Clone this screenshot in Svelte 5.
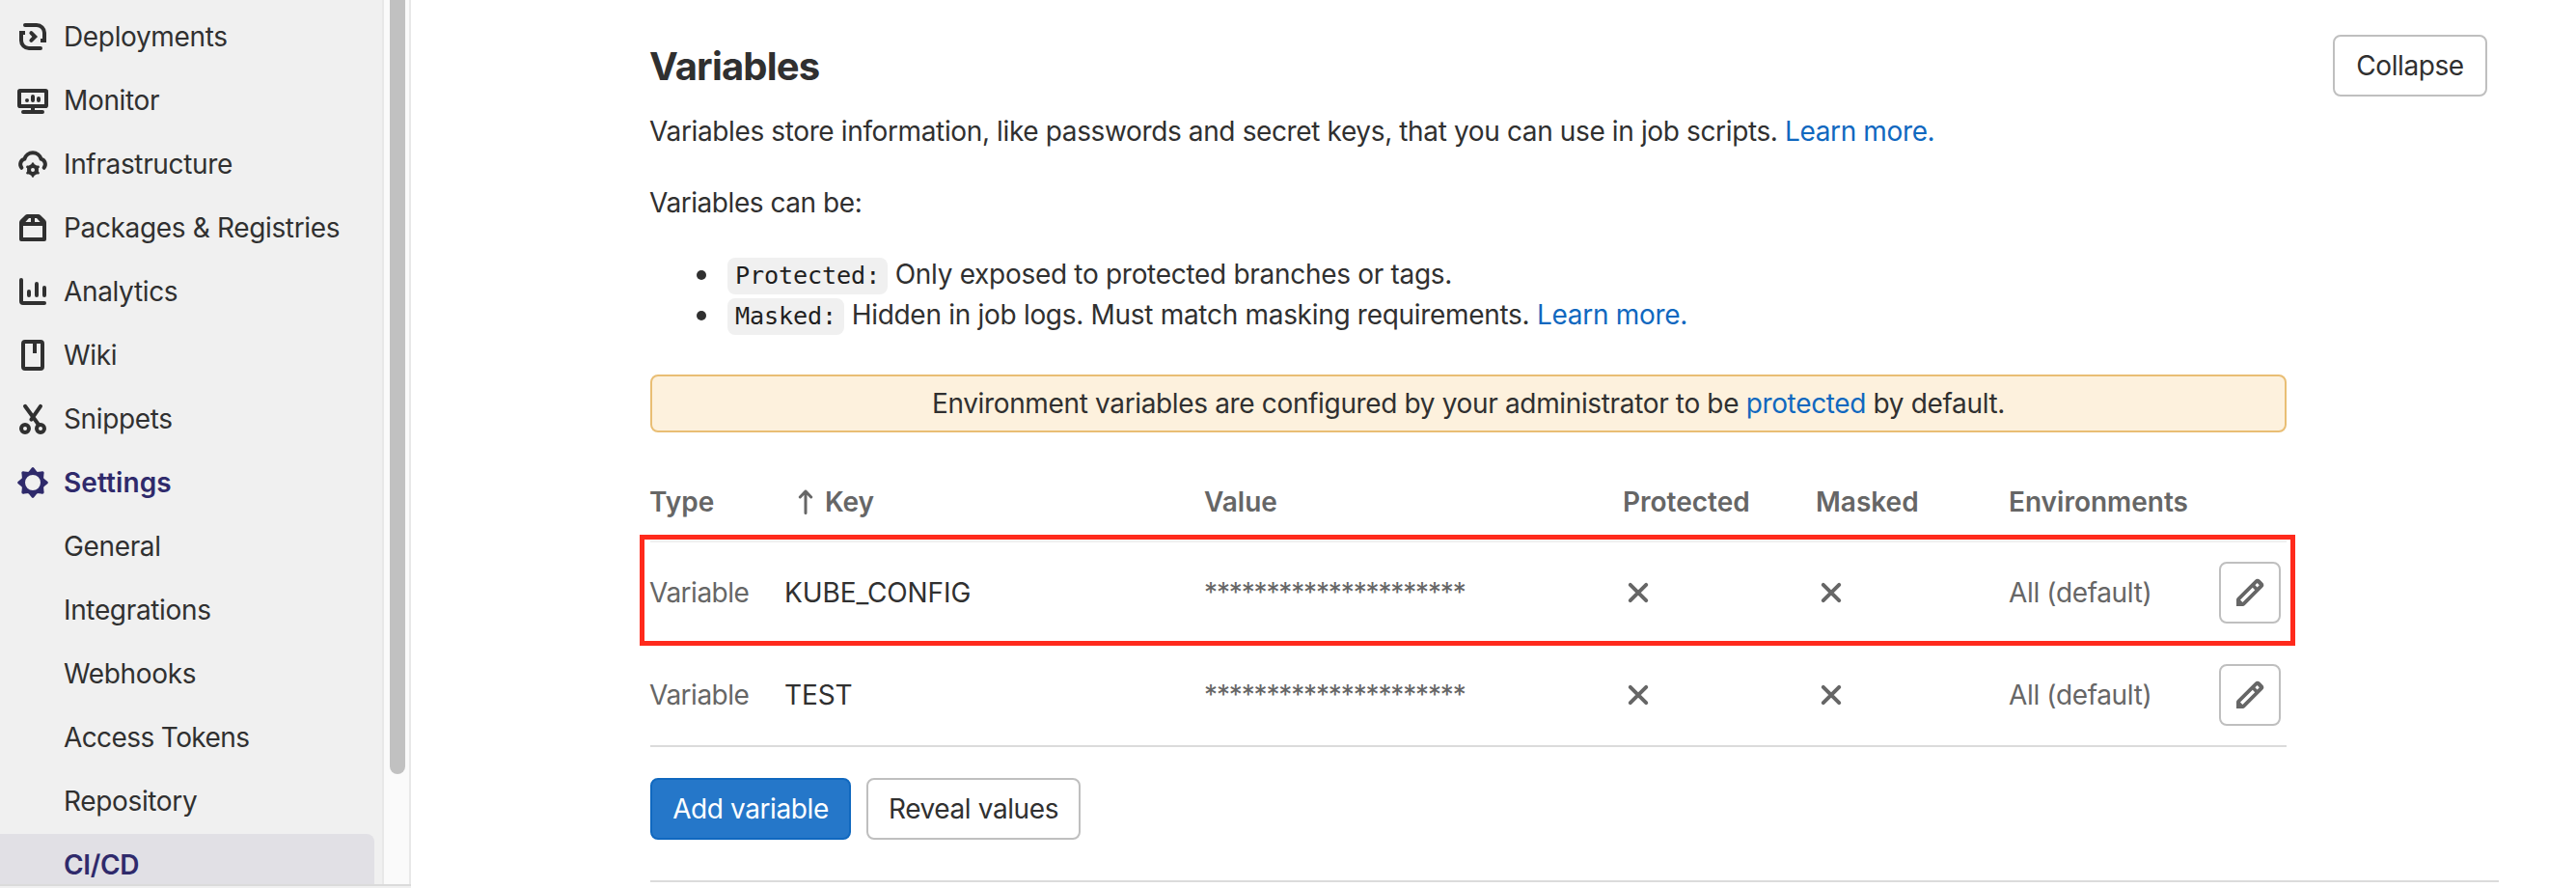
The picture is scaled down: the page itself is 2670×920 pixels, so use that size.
<script>
  const nav = [
    { id: 'deployments', label: 'Deployments' },
    { id: 'monitor', label: 'Monitor' },
    { id: 'infrastructure', label: 'Infrastructure' },
    { id: 'packages', label: 'Packages & Registries' },
    { id: 'analytics', label: 'Analytics' },
    { id: 'wiki', label: 'Wiki' },
    { id: 'snippets', label: 'Snippets' },
    { id: 'settings', label: 'Settings', current: true }
  ];
  const settings = ['General', 'Integrations', 'Webhooks', 'Access Tokens', 'Repository', 'CI/CD'];
  const active = 'CI/CD';
  const variables = [
    { key: 'KUBE_CONFIG', highlighted: true },
    { key: 'TEST', highlighted: false }
  ];
  const mask = '*'.repeat(21);
  const gearTeeth = [0, 45, 90, 135, 180, 225, 270, 315];
  const smallTeeth = [0, 60, 120, 180, 240, 300];
</script>

{#snippet icon(id)}
  <svg class="icon" viewBox="0 0 16 16" fill="none" stroke="currentColor" stroke-width="2" stroke-linecap="round">
    {#if id === 'deployments'}
      <path d="M4 2h6a4 4 0 0 1 4 4v2M12 14H6a4 4 0 0 1-4-4V8" />
      <path d="M14 7v3h-2M2 9V6h2" stroke-linecap="butt" />
      <path d="M7.2 6.1L9.1 8 7.2 9.9" />
    {:else if id === 'monitor'}
      <rect x="1" y="3" width="14" height="8" rx=".4" />
      <path d="M8 12v1M3 14h10M5 8v.01M8 6v2M11 7v1" />
    {:else if id === 'infrastructure'}
      <path d="M2.2 9.9A2.9 2.9 0 0 1 3.7 5.3a4.5 4.5 0 0 1 8.6 0 2.9 2.9 0 0 1 1.5 4.6" />
      <circle cx="8" cy="11" r="2" />
      {#each smallTeeth as a}
        <path d="M7 8.6l.5-1.2q.5-.6 1 0L9 8.6z" fill="currentColor" stroke="none" transform="rotate({a} 8 11)" />
      {/each}
    {:else if id === 'packages'}
      <path fill="currentColor" stroke="none" fill-rule="evenodd" d="M5.300 1h5.400a2 2 0 0 1 1.400.6l2.300 2.300a2 2 0 0 1 .6 1.400V14a1 1 0 0 1-1 1H2a1 1 0 0 1-1-1V5.300a2 2 0 0 1 .6-1.400l2.300-2.300A2 2 0 0 1 5.300 1zM3 7v6h10V7zM6 3L4.200 5H7V3zM9 3v2h2.800L10 3z" />
    {:else if id === 'analytics'}
      <path d="M2 2v11a1 1 0 0 0 1 1h11M6 8v2M10 4v6M14 6v4" />
    {:else if id === 'wiki'}
      <rect x="3" y="1" width="10" height="14" rx="1" />
      <path d="M9 2v5" stroke-linecap="butt" />
    {:else if id === 'snippets'}
      <circle cx="4" cy="13" r="2" />
      <circle cx="12" cy="13" r="2" />
      <path d="M4 1.400L11 11M12 1.400L7.200 8.300" />
    {:else if id === 'settings'}
      <circle cx="8" cy="8" r="5" />
      {#each gearTeeth as a}
        <path d="M5.500 2.700L7 .900q1-1.700 2 0L10.500 2.700z" fill="currentColor" stroke="none" transform="rotate({a} 8 8)" />
      {/each}
    {:else if id === 'close'}
      <path d="M3.900 3.900l8.200 8.200M12.100 3.900l-8.200 8.200" />
    {:else if id === 'pencil'}
      <path fill="currentColor" stroke="none" fill-rule="evenodd" d="M1 15v-3.300a1.500 1.500 0 0 1 .44-1.060L10.600 1.500a1.900 1.900 0 0 1 2.700 0l1.200 1.200a1.900 1.900 0 0 1 0 2.700L5.400 14.560a1.500 1.500 0 0 1-1.060.44zM11.800 3l1.100 1.100-1.100 1.100-1.100-1.100zM9.400 5.400l1.200 1.200-6.400 6.400-1.200-1.200z" />
    {/if}
  </svg>
{/snippet}

<div class="page">
  <aside>
    <nav>
      {#each nav as item}
        <a class="item" class:current={item.current} href="#{item.id}">
          {@render icon(item.id)}
          <span>{item.label}</span>
        </a>
      {/each}
      {#each settings as label}
        <a class="item sub" class:tight={label === 'Access Tokens'} class:active={label === active} href="#settings"><span>{label}</span></a>
      {/each}
    </nav>
    <div class="track"><div class="thumb"></div></div>
  </aside>

  <main>
    <section>
      <header>
        <h2>Variables</h2>
        <button class="btn collapse">Collapse</button>
      </header>
      <p class="intro">Variables store information, like passwords and secret keys, that you can use in job scripts. <a href="#learn">Learn more.</a></p>
      <p class="can">Variables can be:</p>
      <ul>
        <li><code>Protected:</code> <span>Only exposed to protected branches or tags.</span></li>
        <li><code>Masked:</code> <span>Hidden in job logs. Must match masking requirements. <a href="#masked">Learn more.</a></span></li>
      </ul>

      <div class="content">
        <div class="alert"><span>Environment variables are configured by your administrator to be <a href="#protected">protected</a> by default.</span></div>

        <div class="table">
          <div class="row head">
            <span class="type">Type</span>
            <span class="sort">
              <svg class="arrow" viewBox="0 0 16 28" fill="none" stroke="currentColor" stroke-width="3" stroke-linecap="round" stroke-linejoin="round"><path d="M8 25.500V3M2.300 9L8 3l5.700 6" /></svg>Key
            </span>
            <span>Value</span>
            <span>Protected</span>
            <span>Masked</span>
            <span>Environments</span>
          </div>
          {#each variables as v}
            <div class="row body" class:highlighted={v.highlighted}>
              <span class="type">Variable</span>
              <span class="key">{v.key}</span>
              <span class="mask">{mask}</span>
              <span class="state">{@render icon('close')}</span>
              <span class="state">{@render icon('close')}</span>
              <span class="env">All (default)</span>
              <button class="btn edit" aria-label="Edit">{@render icon('pencil')}</button>
            </div>
          {/each}
        </div>

        <div class="actions">
          <button class="btn primary">Add variable</button>
          <button class="btn reveal">Reveal values</button>
        </div>
      </div>
    </section>
  </main>
</div>

<style>
  :global(body) {
    background: #fff;
    overflow: hidden;
  }
  .page {
    display: flex;
    width: 2670px;
    height: 920px;
    overflow: hidden;
    box-sizing: border-box;
    font: 28px/42px Inter, 'Liberation Sans', sans-serif;
    letter-spacing: -0.35px;
    color: #303030;
  }
  a {
    color: #1068bf;
    text-decoration: none;
  }
  .icon {
    display: block;
    width: 32px;
    height: 32px;
    flex: none;
  }
  aside {
    display: flex;
    width: 426px;
    height: 916px;
    flex: none;
    border-bottom: 2px solid #dbdbdb;
    box-shadow: 0 2px #f0f0f0;
  }
  nav {
    display: flex;
    flex-direction: column;
    gap: 2px;
    width: 396px;
    box-sizing: border-box;
    padding-top: 6px;
    background: #f0f0f0;
    overflow: hidden;
  }
  .item {
    display: flex;
    align-items: center;
    gap: 16px;
    flex: none;
    width: 388px;
    height: 64px;
    box-sizing: border-box;
    padding-left: 18px;
    border-radius: 0 8px 8px 0;
    color: #303030;
    white-space: nowrap;
  }
  .item.sub {
    padding-left: 66px;
  }
  .item.tight {
    letter-spacing: -0.6px;
  }
  .item.current,
  .item.active {
    color: #2f2a6b;
    font-weight: 600;
  }
  .item.current {
    letter-spacing: 0.1px;
  }
  .item.active {
    background: #e1e0e5;
  }
  .track {
    width: 30px;
    box-sizing: border-box;
    padding: 0 4px 0 6px;
    border: solid #e8e8e8;
    border-width: 0 2px;
    background: #fafafa;
  }
  .thumb {
    width: 16px;
    height: 802px;
    border-radius: 0 0 8px 8px;
    background: #c1c1c1;
  }
  main {
    flex: 1;
    padding: 36px 80px 0 248px;
  }
  section {
    height: 876px;
    border-bottom: 2px solid #dbdbdb;
  }
  header {
    display: flex;
    justify-content: space-between;
    height: 64px;
    padding-right: 12px;
  }
  h2 {
    margin: 9px 0 0 -1px;
    font-size: 40px;
    line-height: 48px;
    font-weight: 650;
    letter-spacing: -0.8px;
  }
  p {
    margin: 0 0 0 -1px;
    white-space: nowrap;
  }
  .intro {
    padding-top: 15px;
    letter-spacing: -0.37px;
  }
  .can {
    padding-top: 32px;
    letter-spacing: -0.45px;
  }
  ul {
    margin: 32px 0 0;
    padding-left: 48px;
    list-style: none;
    letter-spacing: -0.3px;
  }
  li {
    height: 42px;
    white-space: nowrap;
  }
  li::before {
    content: '';
    display: inline-block;
    width: 10px;
    height: 10px;
    margin-right: 22px;
    border-radius: 50%;
    background: #303030;
    vertical-align: 4px;
  }
  code {
    display: inline-block;
    height: 38px;
    padding: 0 8px;
    border-radius: 8px;
    background: #f0f0f0;
    color: #1f1f1f;
    font: 25.2px/38px 'DejaVu Sans Mono', monospace;
    letter-spacing: -0.15px;
  }
  .content {
    width: 1696px;
  }
  .alert {
    height: 60px;
    margin-top: 41px;
    box-sizing: border-box;
    border: 2px solid #e9be74;
    border-radius: 8px;
    background: #fdf1dd;
    line-height: 56px;
    text-align: center;
  }
  .table {
    margin-top: 48px;
  }
  .row {
    display: grid;
    grid-template-columns: 140px 434px 434px 200px 200px 218px 64px;
    align-items: center;
    box-sizing: border-box;
    color: #666;
    white-space: nowrap;
  }
  .head {
    height: 66px;
    line-height: 48px;
    align-items: start;
    border-bottom: 2px solid #f0f0f0;
    font-weight: 600;
    letter-spacing: 0;
  }
  .sort {
    display: flex;
    align-items: center;
    gap: 12px;
    padding-left: 13px;
  }
  .arrow {
    width: 16px;
    height: 28px;
  }
  .type {
    margin-left: -1px;
  }
  .body {
    height: 106px;
    border-bottom: 2px solid transparent;
  }
  .body:last-child {
    border-color: #dbdbdb;
  }
  .body .type {
    letter-spacing: -0.5px;
  }
  .highlighted {
    position: relative;
  }
  .highlighted::after {
    content: '';
    position: absolute;
    inset: -8px -9px -3px -11px;
    border: 5px solid #ff2a1c;
  }
  .key {
    margin-left: -1px;
    color: #303030;
    letter-spacing: -0.1px;
  }
  .mask {
    letter-spacing: -1.14px;
  }
  .btn {
    height: 64px;
    box-sizing: border-box;
    padding: 0;
    border: 2px solid #bfbfbf;
    border-radius: 8px;
    background: #fff;
    color: #303030;
    font: inherit;
    letter-spacing: -0.4px;
    white-space: nowrap;
  }
  .collapse {
    width: 160px;
  }
  .edit {
    display: grid;
    place-items: center;
    width: 64px;
    color: #666;
  }
  .actions {
    display: flex;
    gap: 16px;
    margin-top: 32px;
  }
  .primary {
    width: 208px;
    border-color: #1068bf;
    background: #2577c9;
    color: #fff;
  }
  .reveal {
    width: 222px;
  }
</style>
